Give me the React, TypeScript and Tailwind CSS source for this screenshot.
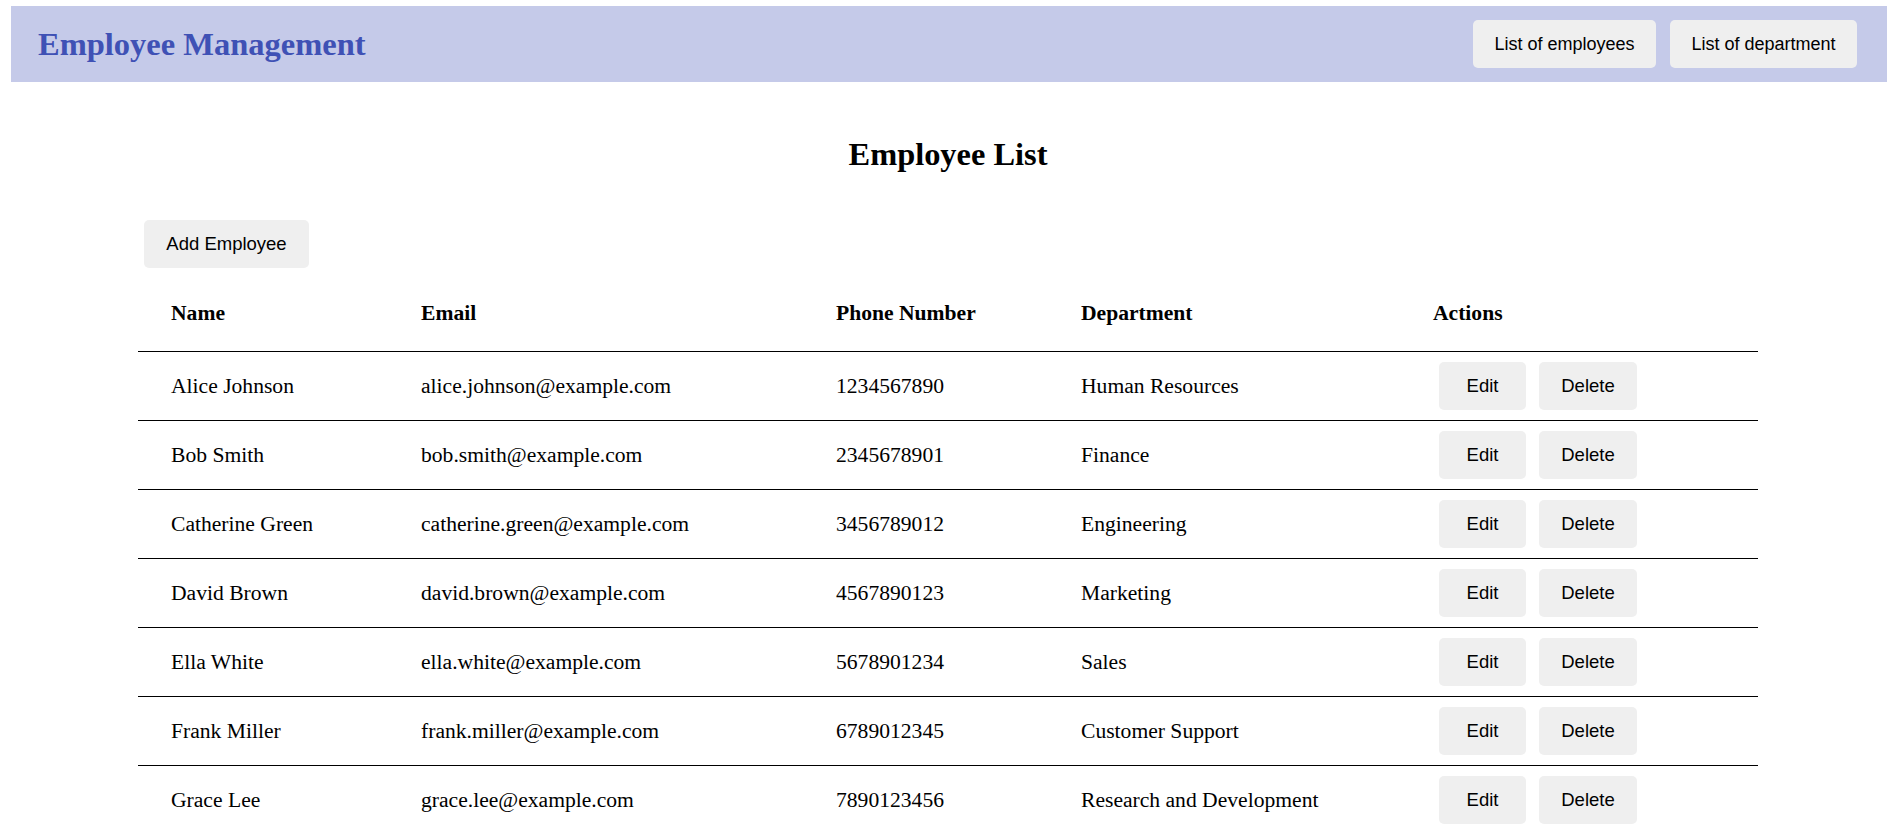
const employees = [
  { name: "Alice Johnson", email: "alice.johnson@example.com", phone: "1234567890", department: "Human Resources" },
  { name: "Bob Smith", email: "bob.smith@example.com", phone: "2345678901", department: "Finance" },
  { name: "Catherine Green", email: "catherine.green@example.com", phone: "3456789012", department: "Engineering" },
  { name: "David Brown", email: "david.brown@example.com", phone: "4567890123", department: "Marketing" },
  { name: "Ella White", email: "ella.white@example.com", phone: "5678901234", department: "Sales" },
  { name: "Frank Miller", email: "frank.miller@example.com", phone: "6789012345", department: "Customer Support" },
  { name: "Grace Lee", email: "grace.lee@example.com", phone: "7890123456", department: "Research and Development" },
];

const serif = "font-['Liberation_Serif','Times_New_Roman',serif]";
const sans = "font-['Liberation_Sans',Arial,sans-serif]";
const cols = "grid grid-cols-[250px_415px_245px_352px_358px]";

function Navbar() {
  return (
    <header className="flex h-[76px] items-center justify-between bg-[#c5cae9] pl-[27px] pr-[30px]">
      <h1 className={`${serif} text-[32.5px] font-bold text-[#3f51b5]`}>Employee Management</h1>
      <nav className={`${sans} flex items-center gap-[14px] text-[18px] text-black`}>
        <button className="h-[48px] w-[183px] rounded-[5px] bg-[#efefef]">List of employees</button>
        <button className="h-[48px] w-[187px] rounded-[5px] bg-[#efefef]">List of department</button>
      </nav>
    </header>
  );
}

export default function App() {
  return (
    <div className="min-h-screen bg-white pl-[11px] pt-[6px] text-black">
      <Navbar />
      <main className="ml-[127px] w-[1620px]">
        <h2 className={`${serif} mt-[54px] text-center text-[32.4px] leading-[37px] font-bold`}>Employee List</h2>
        <button className={`${sans} mt-[47px] ml-[6px] h-[48px] w-[165px] rounded-[5px] bg-[#efefef] text-[18.5px]`}>
          Add Employee
        </button>
        <div className={`${serif} mt-[14px] text-[21.6px]`}>
          <div className={`${cols} h-[70px] items-center border-b border-black pb-[7px] font-bold`}>
            <div className="pl-[33px]">Name</div>
            <div className="pl-[33px]">Email</div>
            <div className="pl-[33px]">Phone Number</div>
            <div className="pl-[33px]">Department</div>
            <div className="pl-[33px]">Actions</div>
          </div>
          {employees.map((e) => (
            <div key={e.email} className={`${cols} h-[69px] items-center border-b border-black`}>
              <div className="pl-[33px]">{e.name}</div>
              <div className="pl-[33px]">{e.email}</div>
              <div className="pl-[33px]">{e.phone}</div>
              <div className="pl-[33px]">{e.department}</div>
              <div className={`${sans} flex gap-[13px] pl-[39px] text-[18.5px]`}>
                <button className="h-[48px] w-[87px] rounded-[5px] bg-[#efefef]">Edit</button>
                <button className="h-[48px] w-[98px] rounded-[5px] bg-[#efefef]">Delete</button>
              </div>
            </div>
          ))}
        </div>
      </main>
    </div>
  );
}
